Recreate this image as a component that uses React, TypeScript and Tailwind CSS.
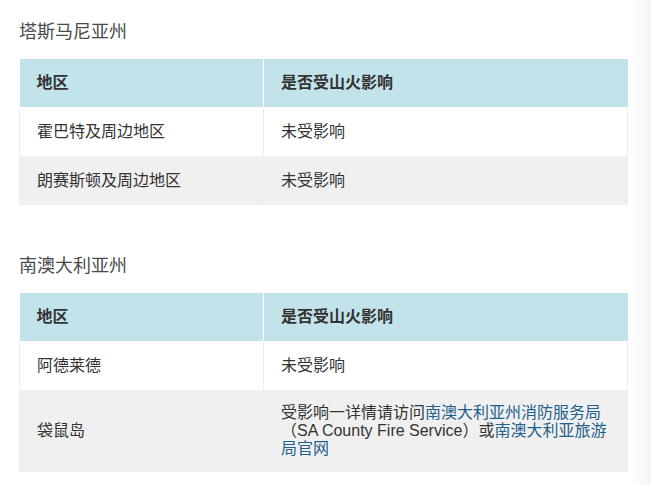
const font = { fontFamily: '"Liberation Sans", "Noto Sans CJK SC", sans-serif' }

type Row = { region: string; status: React.ReactNode }

const link = 'text-[#1f5f8b]'

const tasmania: Row[] = [
  { region: '霍巴特及周边地区', status: '未受影响' },
  { region: '朗赛斯顿及周边地区', status: '未受影响' },
]

const southAustralia: Row[] = [
  { region: '阿德莱德', status: '未受影响' },
  {
    region: '袋鼠岛',
    status: (
      <>
        受影响一详情请访问<span className={link}>南澳大利亚州消防服务局</span>（SA County Fire Service）或<span className={link}>南澳大利亚旅游局官网</span>
      </>
    ),
  },
]

function StateTable({ title, rows }: { title: string; rows: Row[] }) {
  return (
    <section>
      <h2 className="text-[18px] leading-[24px] text-[#4a4a4a] font-normal mb-[15px]">{title}</h2>
      <table className="w-[609px] border-collapse table-fixed text-[16px] leading-[18px] text-[#333]">
        <thead>
          <tr className="h-[48px] bg-[#c2e3e9]">
            <th className="w-[244px] px-[17px] text-left font-bold border-r border-white">地区</th>
            <th className="px-[17px] text-left font-bold">是否受山火影响</th>
          </tr>
        </thead>
        <tbody>
          {rows.map((r, i) => (
            <tr key={r.region} className={i % 2 === 1 ? 'h-[49px] bg-[#f0f0f0]' : 'h-[49px] bg-white'}>
              <td className="px-[17px] py-[14px] align-middle border-l border-r border-[#eeeeee]">{r.region}</td>
              <td className="px-[17px] py-[14px] align-middle border-r border-[#eeeeee]">{r.status}</td>
            </tr>
          ))}
        </tbody>
      </table>
    </section>
  )
}

export default function App() {
  return (
    <div className="flex w-[651px] h-[485px] bg-white overflow-hidden" style={font}>
      <main className="w-[630px] pl-[19px] pt-[20px] flex flex-col gap-[49px]">
        <StateTable title="塔斯马尼亚州" rows={tasmania} />
        <StateTable title="南澳大利亚州" rows={southAustralia} />
      </main>
      <aside className="flex-1 bg-gradient-to-r from-white to-[#f5f5f5]" />
    </div>
  )
}
